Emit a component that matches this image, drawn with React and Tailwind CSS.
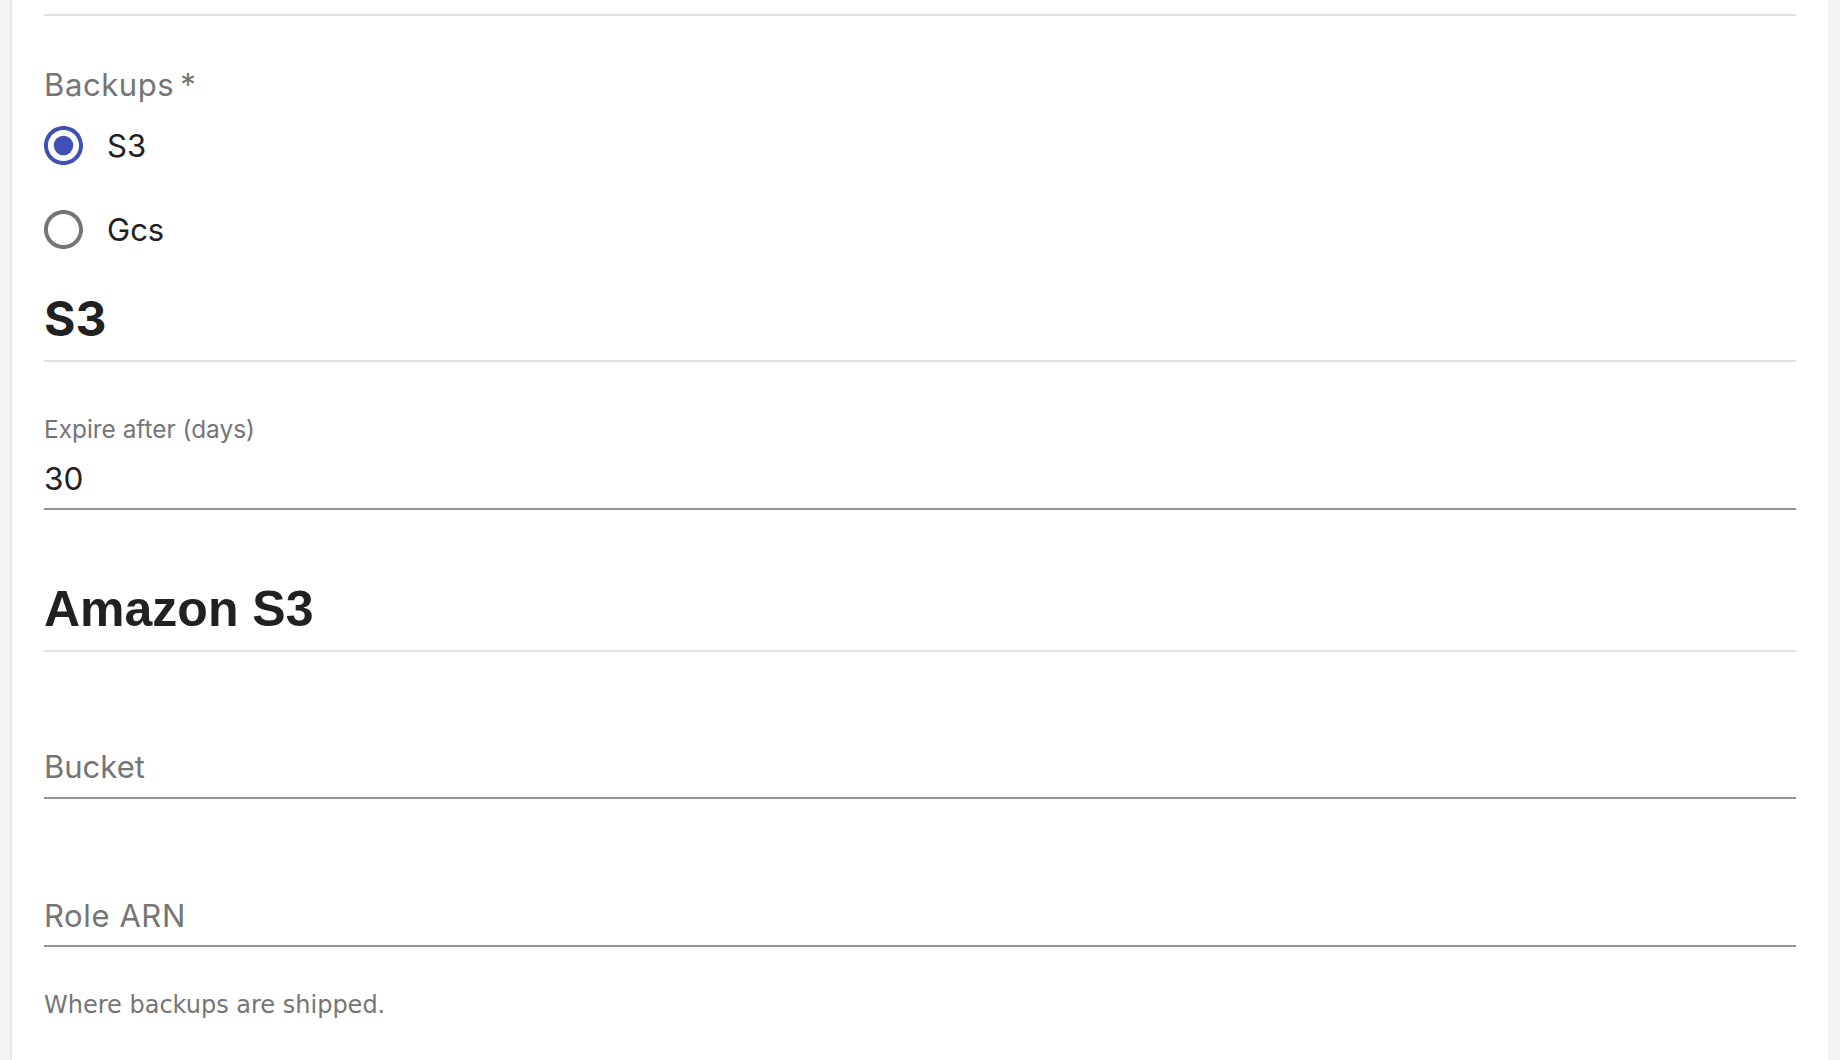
import React from "react";

function Radio({ checked }) {
  return checked ? (
    <svg viewBox="2 2 20 20" className="w-[39px] h-[39px] shrink-0" fill="#3f51b5">
      <path d="M12 2C6.48 2 2 6.48 2 12s4.48 10 10 10 10-4.48 10-10S17.52 2 12 2zm0 18c-4.42 0-8-3.58-8-8s3.58-8 8-8 8 3.58 8 8-3.58 8-8 8z" />
      <circle cx="12" cy="12" r="5" />
    </svg>
  ) : (
    <svg viewBox="2 2 20 20" className="w-[39px] h-[39px] shrink-0" fill="#757575">
      <path d="M12 2C6.48 2 2 6.48 2 12s4.48 10 10 10 10-4.48 10-10S17.52 2 12 2zm0 18c-4.42 0-8-3.58-8-8s3.58-8 8-8 8 3.58 8 8-3.58 8-8 8z" />
    </svg>
  );
}

export default function App() {
  return (
    <div className="flex h-[1060px] w-full overflow-hidden bg-[#f3f3f3]">
      <div className="w-[12px] shrink-0 bg-[#f3f3f3]" />
      <div className="flex-1 bg-white px-[32px] shadow-[0_0_3px_rgba(0,0,0,0.14)] font-['Inter',sans-serif]">
        <div className="h-[14px]" />
        <div className="h-[2px] bg-[#e0e0e0]" />

        <div className="mt-[51px] text-[31px] leading-[36px] tracking-[0.6px] text-[#757575]">
          Backups<span className="ml-[6px]">*</span>
        </div>

        <div className="flex flex-col">
          <label className="flex h-[84px] items-center gap-[24px]">
            <Radio checked />
            <span className="text-[31px] leading-none text-[#212121]">S3</span>
          </label>
          <label className="flex h-[84px] items-center gap-[24px]">
            <Radio />
            <span className="text-[31px] leading-none text-[#212121]">Gcs</span>
          </label>
        </div>

        <h2 className="mt-[20px] text-[48px] font-bold leading-[56px] text-[#212121]">S3</h2>
        <div className="mt-[13px] h-[2px] bg-[#e0e0e0]" />

        <div className="mt-[52px] text-[24.4px] leading-[30px] text-[#757575]">Expire after (days)</div>
        <div className="mt-[15px] text-[31.5px] leading-[40px] text-[#212121]">30</div>
        <div className="mt-[9px] h-[2px] bg-[#949494]" />

        <h2 className="mt-[69px] font-['Liberation_Sans',Arial,sans-serif] text-[50px] font-bold leading-[60px] text-[#212121]">
          Amazon S3
        </h2>
        <div className="mt-[11px] h-[2px] bg-[#e0e0e0]" />

        <div className="mt-[95px] text-[31px] leading-[40px] text-[#757575]">Bucket</div>
        <div className="mt-[10px] h-[2px] bg-[#949494]" />

        <div className="mt-[97px] text-[31px] leading-[40px] tracking-[0.6px] text-[#757575]">Role ARN</div>
        <div className="mt-[9px] h-[2px] bg-[#949494]" />

        <div className="mt-[43px] font-['DejaVu_Sans',sans-serif] text-[24px] leading-[30px] text-[#757575]">
          Where backups are shipped.
        </div>
      </div>
      <div className="w-[12px] shrink-0 bg-[#f3f3f3]" />
    </div>
  );
}
